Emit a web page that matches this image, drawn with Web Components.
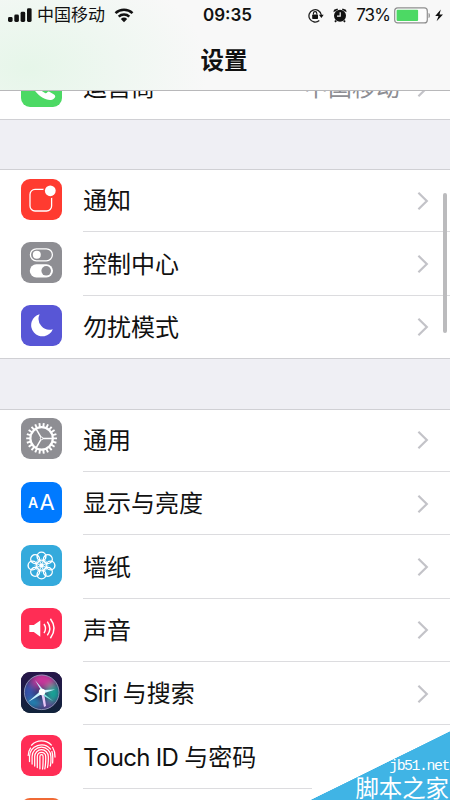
<!DOCTYPE html>
<html lang="zh-CN"><head><meta charset="utf-8"><title>设置</title>
<style>html,body{margin:0;height:800px;overflow:hidden;background:#fff}</style></head>
<body>
<settings-screen></settings-screen>

<template id="screen">
<style>
:host{display:flex;flex-direction:column;position:relative;width:450px;height:800px;overflow:hidden;background:#efeff4;color:#111;font-family:Inter,"Noto Sans CJK SC",sans-serif}
main{display:flex;flex-direction:column;gap:49.5px;margin-top:-34.4px}
.bar{position:absolute;left:443px;top:193px;width:3.5px;height:140px;border-radius:2px;background:#bbbbbd}
corner-mark{position:absolute;right:0;bottom:0}
nav-header{position:relative;z-index:2}
.en{letter-spacing:-.68px}
</style>
<nav-header>设置</nav-header>
<main>
<settings-group>
<settings-row icon="phone" color="#4cd964" value="中国移动">运营商</settings-row>
</settings-group>
<settings-group>
<settings-row icon="notify" color="#ff3b30">通知</settings-row>
<settings-row icon="control" color="#8e8e93">控制中心</settings-row>
<settings-row icon="moon" color="#5856d6">勿扰模式</settings-row>
</settings-group>
<settings-group>
<settings-row icon="gear" color="#8e8e93">通用</settings-row>
<settings-row icon="display" color="#007aff">显示与亮度</settings-row>
<settings-row icon="flower" color="#34aadc">墙纸</settings-row>
<settings-row icon="sound" color="#ff2d55">声音</settings-row>
<settings-row icon="siri" color="#15162f"><span class="en">Siri </span>与搜索</settings-row>
<settings-row icon="touch" color="#ff2d55" class="last"><span class="en">Touch ID </span>与密码</settings-row>
<settings-row icon="sos" color="#f06a35"></settings-row>
</settings-group>
</main>
<div class="bar"></div>
<corner-mark></corner-mark>
</template>

<template id="header">
<style>
:host{display:block;box-sizing:border-box;flex:none;height:90.6px;border-bottom:1px solid #b8b8ba;background:radial-gradient(ellipse 180px 110px at 28px 68px,#e6f6e9 0,#eff7f1 50%,#f8f8f8 100%)}
h1{margin:0;height:60px;font-size:23.5px;line-height:63px;font-weight:600;text-align:center;padding-right:2px}
</style>
<status-bar></status-bar><h1><slot></slot></h1>
</template>

<template id="status">
<style>
:host{display:grid;grid-template-columns:1fr auto 1fr;align-items:center;height:29px;padding:0 6px 0 8px}
div{display:flex;align-items:center}
.r{justify-content:flex-end}
.carrier{font-size:17px;margin:0 9px 0 5px;line-height:29px;padding-top:1px}
.time{font-size:17px;font-weight:600;padding-left:3px}
.pct{font-size:17px;margin:0 4px 0 9px;letter-spacing:-.9px}
svg{display:block;flex:none}
</style>
<div><svg width="24" height="15"><g fill="#111"><rect x="0" y="9" width="4.6" height="5" rx="1.4"/><rect x="6.3" y="6.6" width="4.6" height="7.4" rx="1.4"/><rect x="12.6" y="3.8" width="4.6" height="10.2" rx="1.4"/><rect x="19" y=".2" width="4.6" height="13.8" rx="1.4"/></g></svg>
<span class="carrier">中国移动</span>
<svg width="20" height="15" viewBox="0 0 20 15"><path d="M1.5 5.2a12.3 12.3 0 0 1 17 0M4.7 8.7a7.7 7.7 0 0 1 10.6 0" fill="none" stroke="#111" stroke-width="2.5"/><path d="M6.8 11a4.8 4.8 0 0 1 6.4 0L10 14.3z" fill="#111"/></svg></div>
<span class="time">09:35</span>
<div class="r"><svg width="16" height="15" viewBox="0 0 16 15"><path d="M11.3 12.5A6.2 6.2 0 1 1 13.3 7" fill="none" stroke="#222" stroke-width="1.3"/><path d="M10.9 6.8h4.8L13.4 10z" fill="#111"/><rect x="4.2" y="6.6" width="5.8" height="4.3" rx=".6" fill="#111"/><path d="M5.4 6.6V5.3a1.7 1.7 0 0 1 3.4 0v1.3" fill="none" stroke="#111" stroke-width="1.1"/></svg>
<svg width="14" height="15" viewBox="0 0 14 15" style="margin-left:9px"><g fill="#111"><circle cx="7" cy="7.7" r="6"/><path d="M.4 4.3 1 1.7 4.4.5 5 1.8zM13.6 4.3 13 1.7 9.6.5 9 1.8zM2 12l2 1-1.5 1.5-1-.9zM12 12l-2 1 1.5 1.5 1-.9z"/></g><path d="M7.2 4.2v4H4" fill="none" stroke="#f8f8f8" stroke-width="1.2"/></svg>
<span class="pct">73%</span>
<svg width="50" height="17" viewBox="0 0 50 17"><rect x=".7" y=".9" width="32.6" height="15" rx="3" fill="#fcfcfc" stroke="#8e8e8e" stroke-width="1.2"/><rect x="2.6" y="2.8" width="21.5" height="11.2" rx="1" fill="#4cd964"/><path d="M34.5 6c2 0 2 5 0 5z" fill="#999"/><path d="M46.8 2.4 41.2 9h3.3l-1.9 5.2L49 7.5h-3.5z" fill="#111"/></svg></div>
</template>

<template id="group">
<style>:host{display:block;background:#fff;box-shadow:inset 0 1px #d0d0d4,inset 0 -1px #d0d0d4}
::slotted(:last-child){--line:transparent}</style><slot></slot>
</template>

<template id="row">
<style>
:host{display:flex;height:63.36px;box-sizing:border-box;padding-left:21px}
.icon{width:41px;height:41px;border-radius:9px;margin:9.7px 21px 0 0;flex:none;overflow:hidden}
.icon svg{display:block}
.body{flex:1;display:flex;align-items:center;box-sizing:border-box;background:linear-gradient(var(--line,#dcdcdf),var(--line,#dcdcdf)) bottom left/var(--line-w,100%) 1px no-repeat;padding-right:21px}
.label{flex:1;font-size:24px;line-height:60px;white-space:pre;padding-top:1px}
.value{font-size:24px;line-height:60px;color:#8e8e93;margin-right:17px}
.chev{display:block}
:host(.last){--line-w:229px}
</style>
<div class="icon"></div>
<div class="body"><span class="label"><slot></slot></span><span class="value"></span>
<svg class="chev" width="12" height="20" viewBox="0 0 12 20"><path d="M1.4 1.8 9.8 10l-8.4 8.2" fill="none" stroke="#c3c3c8" stroke-width="2.2"/></svg></div>
</template>

<template id="mark">
<style>
:host{display:flex;flex-direction:column;align-items:flex-end;justify-content:flex-end;width:140px;height:69px;background:linear-gradient(to bottom right,transparent 50%,#40b4e5 50.5%);color:#fff;box-sizing:border-box}
.u{font:14.8px/16px "Liberation Mono",monospace;letter-spacing:-1.4px;padding:0 1px 0 0}
.n{font:23.4px/26px "Noto Sans CJK SC",sans-serif;padding-right:1px}
</style><span class="u">jb51.net</span><span class="n">脚本之家</span>
</template>

<script>
const ring=(n,f)=>Array.from({length:n},(_,i)=>f(i*360/n)).join('');
const icons={
phone:`<path d="M10 10c2-3 5-3 6 0l1 4c0 2-3 2-2 4 2 4 5 7 9 9 2 1 2-2 4-1.5l5 3c3 2 0 5-3 5.5C20 35 6 19 10 10z" fill="#fff"/>`,
notify:`<rect x="9" y="10.4" width="21.6" height="21.6" rx="5" fill="none" stroke="#fff" stroke-width="1.3"/><circle cx="29.3" cy="12" r="7.2" fill="#ff3b30"/><circle cx="29.3" cy="11.8" r="5.4" fill="#fff"/>`,
control:`<rect x="9.4" y="6.8" width="22" height="12" rx="6" fill="none" stroke="#fff" stroke-width="1.3"/><circle cx="15.8" cy="12.8" r="4" fill="#fff"/><rect x="8.8" y="22.2" width="23.2" height="13.2" rx="6.6" fill="#fff"/><circle cx="25.2" cy="28.8" r="4.8" fill="#8e8e93"/>`,
moon:`<path d="M18.6 9.3A11.2 11.2 0 1 0 31.8 24.2 A10.9 10.9 0 0 1 18.6 9.3z" fill="#fff"/>`,
gear:`<g transform="translate(20.6 20.4)" stroke="#fff" fill="none"><circle r="11.2" stroke-width="2.2"/>${ring(22,a=>`<path d="M11.5 0H15.4" stroke-width="1.9" transform="rotate(${a})"/>`)}<path d="M0 0H11M0 0-5.5-9.5M0 0-5.5 9.5" stroke-width="1.5"/><circle r="1.3" fill="#8e8e93" stroke-width="1"/></g>`,
display:`<g fill="#fff" font-family="Inter,sans-serif" text-anchor="middle"><text x="12" y="26" font-size="14" font-weight="600">A</text><text x="26" y="28" font-size="22" font-weight="400">A</text></g>`,
flower:`<g transform="translate(20.5 20.5)" stroke="#fff" stroke-width="1.4" fill="none">${ring(8,a=>`<circle cx="9" r="4.4" transform="rotate(${a})"/>`)}${ring(8,a=>`<ellipse cx="4.2" rx="2.2" ry="1.4" transform="rotate(${a})" stroke-width=".7"/>`)}<circle r="2" fill="#fff" stroke="none"/></g>`,
sound:`<path d="M8.3 17h4.5l6.5-4.6v16.3l-6.5-4.6H8.3z" fill="#fff"/><path d="M23 16q3 4.5 0 9M26.3 13.6q5 7 0 13.8M29.4 10.8q7.4 9.7 0 19.4" fill="none" stroke="#fff" stroke-width="1.5"/>`,
siri:`<defs><linearGradient id="b" x1="0" y1="0" x2="0" y2="1"><stop stop-color="#27164a"/><stop offset="1" stop-color="#10233b"/></linearGradient><filter id="f" x="-50%" y="-50%" width="200%" height="200%"><feGaussianBlur stdDeviation="3"/></filter><filter id="g" x="-20%" y="-20%" width="140%" height="140%"><feGaussianBlur stdDeviation=".6"/></filter><clipPath id="c"><circle cx="20.7" cy="20.3" r="17.5"/></clipPath></defs><rect width="41" height="41" fill="url(#b)"/><g clip-path="url(#c)"><rect width="41" height="41" fill="#30346b"/><g filter="url(#f)"><ellipse cx="22" cy="8" rx="12" ry="8" fill="#c8359a"/><ellipse cx="8" cy="20" rx="6" ry="9" fill="#3455b0"/><ellipse cx="32" cy="21" rx="7" ry="9" fill="#18a597"/><ellipse cx="13" cy="31" rx="8" ry="4" fill="#1b93bd"/><ellipse cx="26" cy="33" rx="7" ry="4" fill="#6a4b9d"/></g><g filter="url(#g)"><path d="M20.5 19 14 8l8 9.5zM22 18l12-.5-12 4zM20 18.5 7 30l14-8z" fill="#c9f3ff"/><path d="m20 20 3 15 2-1-2-14z" fill="#e8c9f8"/><path d="m21 20 11 9-9-5z" fill="#7be7dc"/><circle cx="21" cy="20" r="3.2" fill="#fff"/></g></g><circle cx="20.7" cy="20.3" r="17.3" fill="none" stroke="#9298b8" stroke-width=".9"/>`,
touch:`<g fill="none" stroke="#fff" stroke-width="1.25" stroke-linecap="round"><path d="M10.5 10.2a14 14 0 0 1 19.8-.2M7.2 20.5q.3-4.7 2.3-7.4M31.7 12.5q2.3 3.6 2.3 9.5M8.5 26.5v-5a12 12 0 0 1 21-7.4M30.9 16.5q1.3 3 .7 11.5M11.1 29v-7.5a9.4 9.4 0 0 1 18.8 0q.3 6-.6 9.5M13.7 31v-9.5a6.8 6.8 0 0 1 13.6 0q.2 6-.8 11M16.3 32.5v-11a4.2 4.2 0 0 1 8.4 0q.2 7-.9 12.4M18.9 33.8V21.5q0-1.8 1.6-1.8t1.6 1.8q.1 7-.5 12.5"/></g>`,
sos:``};
const make=(tag,id,setup)=>customElements.define(tag,class extends HTMLElement{
 constructor(){super();this.attachShadow({mode:'open'}).append(document.getElementById(id).content.cloneNode(true));}
 connectedCallback(){if(setup)setup(this,this.shadowRoot);}
});
make('settings-row','row',(el,root)=>{
 const box=root.querySelector('.icon');box.style.background=el.getAttribute('color');
 box.innerHTML=`<svg width="41" height="41" viewBox="0 0 41 41">${icons[el.getAttribute('icon')]}</svg>`;
 const v=root.querySelector('.value');
 if(!v)return;
 if(el.hasAttribute('value'))v.textContent=el.getAttribute('value');else v.remove();
 if(el.getAttribute('icon')==='touch')root.querySelector('.chev').remove();
});
make('settings-group','group');
make('status-bar','status');
make('nav-header','header');
make('corner-mark','mark');
make('settings-screen','screen');
</script>
</body></html>
